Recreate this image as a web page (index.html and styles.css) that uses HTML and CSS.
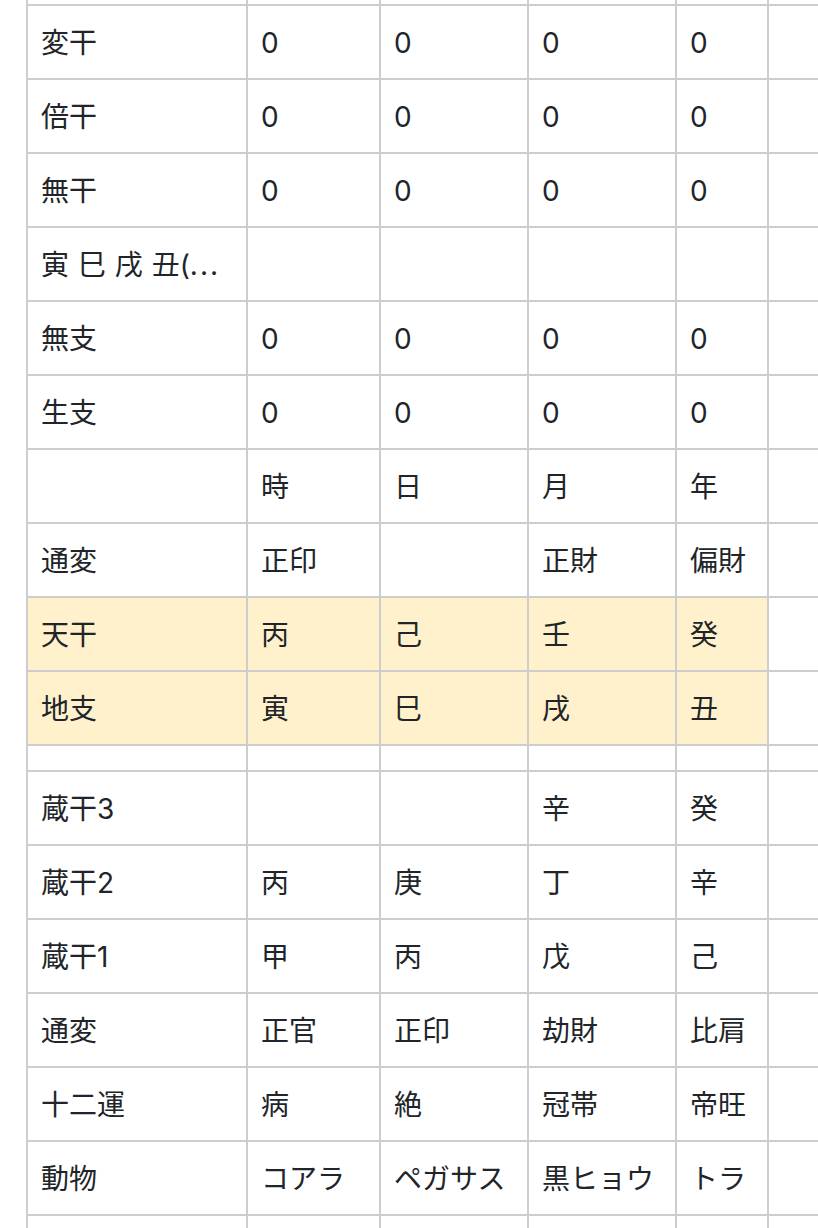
FILE: index.html
```html
<!DOCTYPE html>
<html lang="ja">
<head>
<meta charset="utf-8">
<link rel="stylesheet" href="styles.css">
</head>
<body>
<div class="page">
<table class="meishiki">
<colgroup>
<col class="c-label"><col class="c-hour"><col class="c-day"><col class="c-month"><col class="c-year"><col class="c-extra">
</colgroup>
<tbody>
<tr class="cut"><td></td><td></td><td></td><td></td><td></td><td></td></tr>
<tr><td>変干</td><td>0</td><td>0</td><td>0</td><td>0</td><td></td></tr>
<tr><td>倍干</td><td>0</td><td>0</td><td>0</td><td>0</td><td></td></tr>
<tr><td>無干</td><td>0</td><td>0</td><td>0</td><td>0</td><td></td></tr>
<tr><td class="trunc">寅 巳 戌 丑(<span class="dots">...</span></td><td></td><td></td><td></td><td></td><td></td></tr>
<tr><td>無支</td><td>0</td><td>0</td><td>0</td><td>0</td><td></td></tr>
<tr><td>生支</td><td>0</td><td>0</td><td>0</td><td>0</td><td></td></tr>
<tr><td></td><td>時</td><td>日</td><td>月</td><td>年</td><td></td></tr>
<tr><td>通変</td><td>正印</td><td></td><td>正財</td><td>偏財</td><td></td></tr>
<tr class="hl"><td>天干</td><td>丙</td><td>己</td><td>壬</td><td>癸</td><td class="plain"></td></tr>
<tr class="hl"><td>地支</td><td>寅</td><td>巳</td><td>戌</td><td>丑</td><td class="plain"></td></tr>
<tr class="spacer"><td></td><td></td><td></td><td></td><td></td><td></td></tr>
<tr><td>蔵干3</td><td></td><td></td><td>辛</td><td>癸</td><td></td></tr>
<tr><td>蔵干2</td><td>丙</td><td>庚</td><td>丁</td><td>辛</td><td></td></tr>
<tr><td>蔵干1</td><td>甲</td><td>丙</td><td>戊</td><td>己</td><td></td></tr>
<tr><td>通変</td><td>正官</td><td>正印</td><td>劫財</td><td>比肩</td><td></td></tr>
<tr><td>十二運</td><td>病</td><td>絶</td><td>冠帯</td><td>帝旺</td><td></td></tr>
<tr><td>動物</td><td>コアラ</td><td>ペガサス</td><td>黒ヒョウ</td><td>トラ</td><td></td></tr>
<tr><td></td><td></td><td></td><td></td><td></td><td></td></tr>
</tbody>
</table>
</div>
</body>
</html>
```
FILE: styles.css
```css
html, body {
  margin: 0;
  padding: 0;
  background: #ffffff;
  overflow: hidden;
}
.page {
  padding-left: 26px;
  height: 1228px;
  overflow: hidden;
}
.meishiki {
  border-collapse: collapse;
  table-layout: fixed;
  width: 871px;
  margin-top: -70px;
  font-family: "Inter", "Noto Sans CJK JP", sans-serif;
  font-size: 28px;
  color: #212529;
}
.c-label { width: 220px; }
.c-hour { width: 133px; }
.c-day { width: 148px; }
.c-month { width: 148px; }
.c-year { width: 92px; }
.c-extra { width: 130px; }
.meishiki td {
  border: 2px solid #cdcdcd;
  height: 68px;
  padding: 4px 0 0 13px;
  vertical-align: middle;
  white-space: nowrap;
  overflow: hidden;
  line-height: 1.2;
}
.meishiki .trunc {
  word-spacing: 1px;
}
.meishiki .dots {
  letter-spacing: 2px;
}
.meishiki tr.hl td {
  background: #fff1cc;
}
.meishiki tr.hl td.plain {
  background: #ffffff;
}
.meishiki tr.spacer td {
  height: 24px;
  padding-top: 0;
}
```
